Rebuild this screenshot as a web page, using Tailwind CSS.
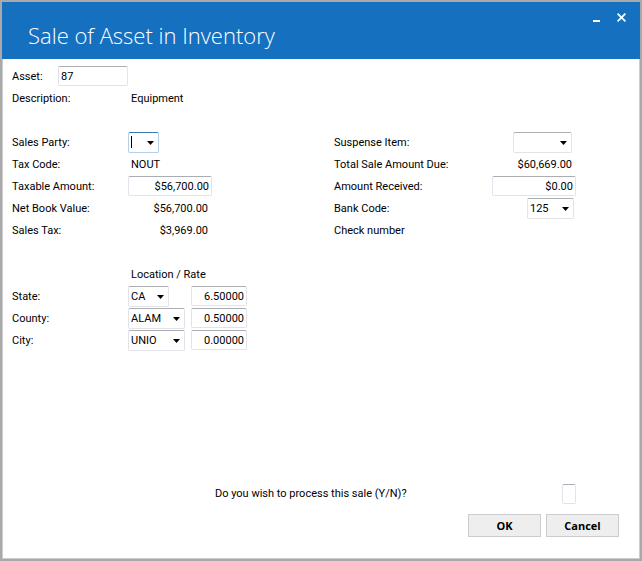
<!DOCTYPE html>
<html lang="en">
<head>
  <meta charset="UTF-8">
  <meta name="viewport" content="width=device-width, initial-scale=1.0">
  <title>Sale of Asset in Inventory</title>
  <script src="https://cdn.jsdelivr.net/npm/@tailwindcss/browser@4"></script>
</head>
<body class="bg-white text-black font-[Roboto,'Liberation_Sans',sans-serif] text-[11px] leading-4">
  <div class="min-h-screen flex flex-col border-2 border-[#a9a9a9]">

    <!-- Title bar -->
    <header class="flex justify-between h-[57px] bg-[#1570c0] text-white">
      <h1 class="pl-[26px] pt-[17px] font-['Open_Sans',sans-serif] text-[22px] leading-8 font-light">Sale of Asset in Inventory</h1>
      <div class="flex gap-2.5 pt-2 pr-2.5">
        <button type="button" aria-label="Minimize" class="w-4 h-4 flex items-center justify-center">
          <svg class="w-4 h-4" viewBox="0 0 16 16" fill="currentColor"><path d="M5 10h7v2H5z"/></svg>
        </button>
        <button type="button" aria-label="Close" class="w-4 h-4 flex items-center justify-center">
          <svg class="w-4 h-4" viewBox="0 0 16 16" fill="none" stroke="currentColor" stroke-width="1.8"><path d="M3.6 3.6l7.8 7.8M11.4 3.6l-7.8 7.8"/></svg>
        </button>
      </div>
    </header>

    <form class="flex-1 flex flex-col pt-1.5 pb-[21px] border-x border-b border-[#cdcdcd]">

      <!-- Asset -->
      <div class="pl-[9px]">
        <div class="flex items-center h-[22px]">
          <label for="asset" class="w-[46px] pt-px">Asset:</label>
          <input id="asset" type="text" value="87" class="w-[70px] h-5 px-0.5 border border-[#e2e3ea] border-t-[#abadb3] rounded-xs">
        </div>
        <div class="flex items-center h-[22px] pt-px">
          <span class="w-[119px]">Description:</span>
          <span>Equipment</span>
        </div>
      </div>

      <!-- Sale details -->
      <div class="grid grid-cols-[322px_1fr] mt-[22px] pl-[9px] pr-[63px]">
        <div>
          <div class="flex items-center h-[22px]">
            <label for="party" class="w-[116px] pt-px">Sales Party:</label>
            <div class="relative">
              <select id="party" class="block appearance-none w-[31px] h-[21px] px-0.5 border border-[#b5cfe7] border-t-[#3d7bad] rounded-xs">
                <option></option>
              </select>
              <span class="absolute left-[3px] top-1 w-px h-3 bg-black"></span>
              <svg class="absolute right-[5px] top-[9px] w-[7px] h-1 pointer-events-none" viewBox="0 0 7 4"><path d="M0 0h7L3.5 4z"/></svg>
            </div>
          </div>
          <div class="flex items-center h-[22px] pt-px">
            <span class="w-[119px]">Tax Code:</span>
            <span>NOUT</span>
          </div>
          <div class="flex items-center h-[22px]">
            <label for="taxable" class="w-[116px] pt-px">Taxable Amount:</label>
            <input id="taxable" type="text" value="$56,700.00" class="w-[84px] h-5 px-0.5 text-right border border-[#e2e3ea] border-t-[#abadb3] rounded-xs">
          </div>
          <div class="flex items-center h-[22px] pt-px">
            <span class="w-[116px]">Net Book Value:</span>
            <span class="w-20 text-right">$56,700.00</span>
          </div>
          <div class="flex items-center h-[22px] pt-px">
            <span class="w-[116px]">Sales Tax:</span>
            <span class="w-20 text-right">$3,969.00</span>
          </div>
        </div>

        <div>
          <div class="flex items-center justify-between h-[22px]">
            <label for="suspense" class="pt-px">Suspense Item:</label>
            <div class="relative mr-1">
              <select id="suspense" class="block appearance-none w-[59px] h-[21px] px-0.5 border border-[#e2e3ea] border-t-[#abadb3] rounded-xs">
                <option></option>
              </select>
              <svg class="absolute right-[5px] top-[9px] w-[7px] h-1 pointer-events-none" viewBox="0 0 7 4"><path d="M0 0h7L3.5 4z"/></svg>
            </div>
          </div>
          <div class="flex items-center justify-between h-[22px] pt-px">
            <span>Total Sale Amount Due:</span>
            <span class="mr-1">$60,669.00</span>
          </div>
          <div class="flex items-center justify-between h-[22px]">
            <label for="received" class="pt-px">Amount Received:</label>
            <input id="received" type="text" value="$0.00" class="w-[84px] h-5 px-0.5 text-right border border-[#e2e3ea] border-t-[#abadb3] rounded-xs">
          </div>
          <div class="flex items-center justify-between h-[22px]">
            <label for="bank" class="pt-px">Bank Code:</label>
            <div class="relative mr-0.5">
              <select id="bank" class="block appearance-none w-[47px] h-[21px] pt-px px-0.5 border border-[#e2e3ea] border-t-[#abadb3] rounded-xs">
                <option>125</option>
              </select>
              <svg class="absolute right-[5px] top-[9px] w-[7px] h-1 pointer-events-none" viewBox="0 0 7 4"><path d="M0 0h7L3.5 4z"/></svg>
            </div>
          </div>
          <div class="flex items-center h-[22px] pt-px">
            <span>Check number</span>
          </div>
        </div>
      </div>

      <!-- Tax rates -->
      <div class="mt-[22px] pl-[9px]">
        <div class="flex items-center h-[22px] pl-[119px] pt-px">Location / Rate</div>
        <div class="flex items-center h-[22px]">
          <label for="state" class="w-[116px] pt-px">State:</label>
          <div class="w-[63px]">
            <div class="relative w-[41px]">
              <select id="state" class="block appearance-none w-full h-[21px] pt-px px-0.5 border border-[#e2e3ea] border-t-[#abadb3] rounded-xs">
                <option>CA</option>
              </select>
              <svg class="absolute right-[5px] top-[9px] w-[7px] h-1 pointer-events-none" viewBox="0 0 7 4"><path d="M0 0h7L3.5 4z"/></svg>
            </div>
          </div>
          <input type="text" aria-label="State rate" value="6.50000" class="w-14 h-5 px-0.5 text-right border border-[#e2e3ea] border-t-[#abadb3] rounded-xs">
        </div>
        <div class="flex items-center h-[22px]">
          <label for="county" class="w-[116px] pt-px">County:</label>
          <div class="w-[63px]">
            <div class="relative w-[57px]">
              <select id="county" class="block appearance-none w-full h-[21px] pt-px px-0.5 border border-[#e2e3ea] border-t-[#abadb3] rounded-xs">
                <option>ALAM</option>
              </select>
              <svg class="absolute right-[5px] top-[9px] w-[7px] h-1 pointer-events-none" viewBox="0 0 7 4"><path d="M0 0h7L3.5 4z"/></svg>
            </div>
          </div>
          <input type="text" aria-label="County rate" value="0.50000" class="w-14 h-5 px-0.5 text-right border border-[#e2e3ea] border-t-[#abadb3] rounded-xs">
        </div>
        <div class="flex items-center h-[22px]">
          <label for="city" class="w-[116px] pt-px">City:</label>
          <div class="w-[63px]">
            <div class="relative w-[57px]">
              <select id="city" class="block appearance-none w-full h-[21px] pt-px px-0.5 border border-[#e2e3ea] border-t-[#abadb3] rounded-xs">
                <option>UNIO</option>
              </select>
              <svg class="absolute right-[5px] top-[9px] w-[7px] h-1 pointer-events-none" viewBox="0 0 7 4"><path d="M0 0h7L3.5 4z"/></svg>
            </div>
          </div>
          <input type="text" aria-label="City rate" value="0.00000" class="w-14 h-5 px-0.5 text-right border border-[#e2e3ea] border-t-[#abadb3] rounded-xs">
        </div>
      </div>

      <!-- Confirmation -->
      <div class="flex items-center justify-between h-[22px] mt-auto pl-[212px] pr-[63px]">
        <label for="confirm">Do you wish to process this sale (Y/N)?</label>
        <input id="confirm" type="text" maxlength="1" class="w-3.5 h-5 px-0.5 border border-[#e2e3ea] border-t-[#abadb3] rounded-xs">
      </div>
      <div class="flex justify-end gap-[5px] mt-[9px] pr-5 font-['Open_Sans',sans-serif] font-bold">
        <button type="submit" class="w-[73px] h-[23px] border border-[#cccccc] bg-[#eeeeee]">OK</button>
        <button type="button" class="w-[73px] h-[23px] border border-[#cccccc] bg-[#eeeeee]">Cancel</button>
      </div>
    </form>
  </div>
</body>
</html>
